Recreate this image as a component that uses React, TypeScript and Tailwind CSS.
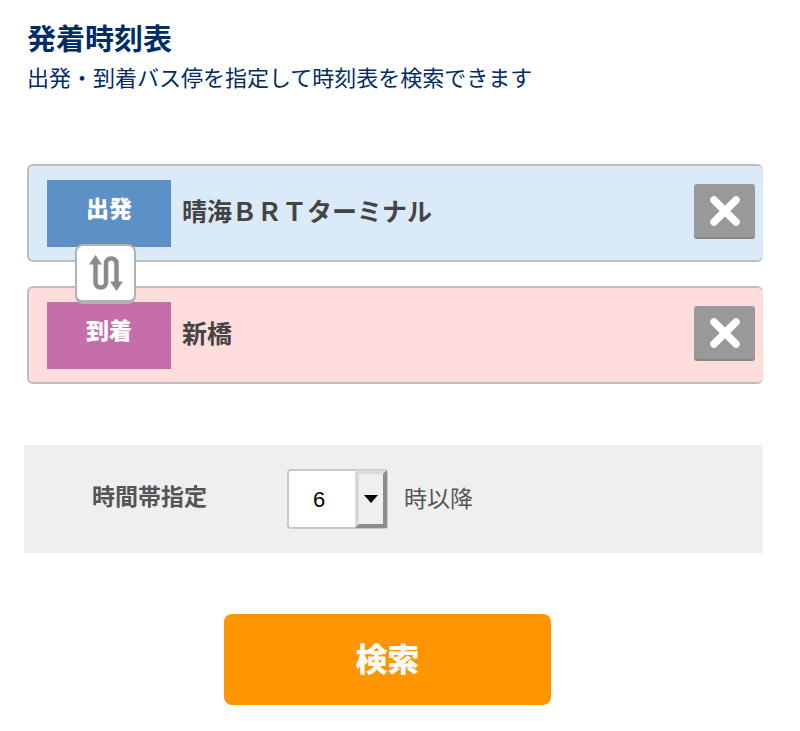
import { useState } from 'react';

const HOURS = Array.from({ length: 18 }, (_, i) => i + 6);

function CloseIcon() {
  return (
    <svg width="32" height="32" viewBox="0 0 32 32" aria-hidden="true">
      <path
        d="M4.500 5.500L27.500 28.500M27.500 5.500L4.500 28.500"
        stroke="#fff"
        strokeWidth="6"
      />
      <path
        d="M5 6L27 28M27 6L5 28"
        stroke="#fff"
        strokeWidth="7.500"
        strokeLinecap="round"
      />
    </svg>
  );
}

function SwapIcon() {
  return (
    <svg width="34" height="36" viewBox="0 0 34 36" aria-hidden="true">
      <path
        d="M6.500 8V27.500a5 5 0 0 0 5 5h0.500a5 5 0 0 0 5 -5V8.500a5 5 0 0 1 5 -5h0.500a5 5 0 0 1 5 5V28"
        fill="none"
        stroke="#8b8b8b"
        strokeWidth="4.500"
      />
      <path d="M0 9.500L6.500 0L13 9.500ZM21 26.500L27.500 36L34 26.500Z" fill="#8b8b8b" />
    </svg>
  );
}

interface StopFieldProps {
  id: string;
  label: string;
  value: string;
  onChange: (value: string) => void;
  boxClass: string;
  labelClass: string;
}

function StopField({ id, label, value, onChange, boxClass, labelClass }: StopFieldProps) {
  return (
    <div
      className={`flex h-[98px] items-center rounded-md border-y-2 border-l-2 border-[#bdbdbd] pr-2 pl-[18px] ${boxClass}`}
    >
      <label
        htmlFor={id}
        className={`flex h-[67px] w-[124px] shrink-0 justify-center pt-3 text-[23px] leading-[34px] font-black text-white ${labelClass}`}
      >
        {label}
      </label>
      <div className="flex min-w-0 flex-1 items-center pb-1 pl-[11px]">
        <input
          id={id}
          type="text"
          value={value}
          onChange={(e) => onChange(e.target.value)}
          className="h-12 min-w-0 flex-1 bg-transparent pb-0.5 text-[25px] font-bold text-[#444] outline-none"
        />
        <button
          type="button"
          aria-label={`${label}をクリア`}
          onClick={() => onChange('')}
          className="flex h-[55px] w-[61px] shrink-0 items-center justify-center rounded-[3px] border-b-2 border-[#858585] bg-[#999]"
        >
          <CloseIcon />
        </button>
      </div>
    </div>
  );
}

export default function App() {
  const [from, setFrom] = useState('晴海ＢＲＴターミナル');
  const [to, setTo] = useState('新橋');
  const [hour, setHour] = useState(6);

  const handleSwap = () => {
    setFrom(to);
    setTo(from);
  };

  return (
    <main className="bg-white pt-5 pr-[37px] pb-6 pl-6 font-['Liberation_Sans','Noto_Sans_CJK_JP',sans-serif]">
      <header className="pl-[3px] text-[#002c68]">
        <h1 className="text-[29px] leading-10 font-bold">発着時刻表</h1>
        <p className="text-[22px] leading-[38px]">出発・到着バス停を指定して時刻表を検索できます</p>
      </header>

      <form onSubmit={(e) => e.preventDefault()}>
        <div className="relative mt-[66px] ml-[3px] flex flex-col gap-6">
          <StopField
            id="from"
            label="出発"
            value={from}
            onChange={setFrom}
            boxClass="bg-[#dbeaf9]"
            labelClass="bg-[#5d90c6]"
          />
          <StopField
            id="to"
            label="到着"
            value={to}
            onChange={setTo}
            boxClass="bg-[#ffdddc]"
            labelClass="bg-[#c66dab]"
          />
          <button
            type="button"
            aria-label="出発と到着を入れ替え"
            onClick={handleSwap}
            className="absolute top-1/2 left-12 flex h-[60px] w-[61px] -translate-y-1/2 items-center justify-center rounded-lg border-2 border-b-4 border-[#b2b2b2] bg-white"
          >
            <SwapIcon />
          </button>
        </div>

        <div className="mt-[61px] flex h-[108px] items-center bg-[#efefef] pl-[68px] text-[23px] text-[#555]">
          <label htmlFor="hour" className="w-[195px] shrink-0 pb-1 font-bold">
            時間帯指定
          </label>
          <div className="relative h-[60px] w-[101px] shrink-0">
            <select
              id="hour"
              value={hour}
              onChange={(e) => setHour(Number(e.target.value))}
              className="h-full w-full appearance-none rounded-sm border-2 border-[#c8c8c8] bg-white pl-6 text-[22px] text-black"
            >
              {HOURS.map((h) => (
                <option key={h} value={h}>
                  {h}
                </option>
              ))}
            </select>
            <span className="pointer-events-none absolute inset-y-px right-px flex w-8 items-center justify-center border-4 border-t-[#d9d9d9] border-r-[#8c8c8c] border-b-[#8c8c8c] border-l-[#d9d9d9] bg-[#efefef]">
              <svg width="14" height="8" viewBox="0 0 14 8" aria-hidden="true">
                <path d="M0 0H14L7 8Z" fill="#000" />
              </svg>
            </span>
          </div>
          <span className="ml-4">時以降</span>
        </div>

        <div className="mt-[61px] flex justify-center pr-3">
          <button
            type="submit"
            className="h-[91px] w-[327px] rounded-lg bg-[#ff9500] text-[32px] font-black text-white"
          >
            検索
          </button>
        </div>
      </form>
    </main>
  );
}
